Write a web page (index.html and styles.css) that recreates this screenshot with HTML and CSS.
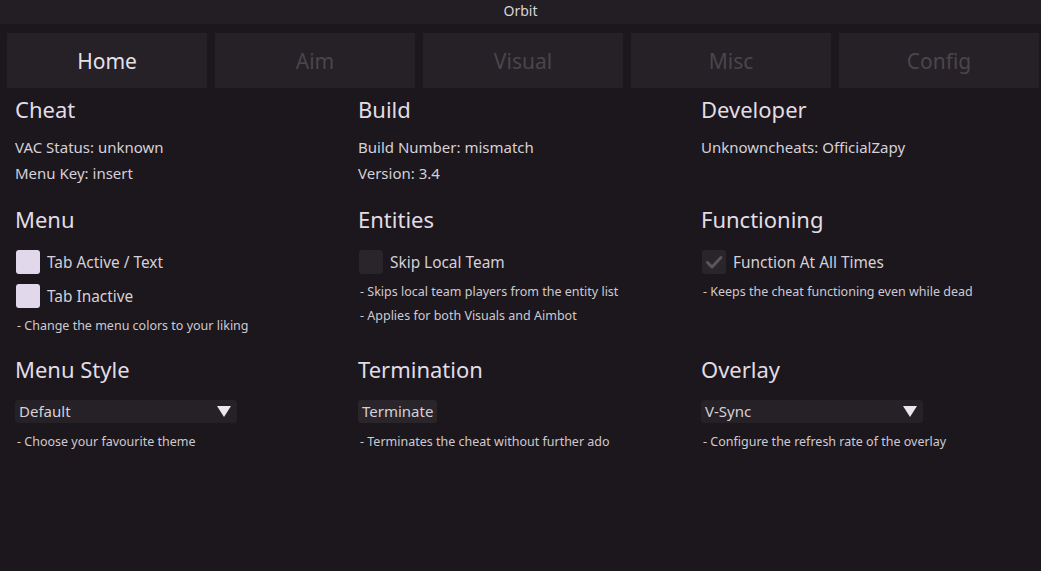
FILE: index.html
```html
<!DOCTYPE html>
<html lang="en">
<head>
    <meta charset="UTF-8">
    <title>Orbit</title>
    <link rel="stylesheet" href="styles.css">
</head>
<body>
    <div class="window">
        <div class="titlebar">Orbit</div>

        <div class="tabs">
            <div class="tab active">Home</div>
            <div class="tab">Aim</div>
            <div class="tab">Visual</div>
            <div class="tab">Misc</div>
            <div class="tab">Config</div>
        </div>

        <div class="grid">
            <!-- Row 1 -->
            <div class="section">
                <h2>Cheat</h2>
                <p class="line">VAC Status: unknown</p>
                <p class="line">Menu Key: insert</p>
            </div>
            <div class="section">
                <h2>Build</h2>
                <p class="line">Build Number: mismatch</p>
                <p class="line">Version: 3.4</p>
            </div>
            <div class="section">
                <h2>Developer</h2>
                <p class="line">Unknowncheats: OfficialZapy</p>
            </div>

            <!-- Row 2 -->
            <div class="section">
                <h2>Menu</h2>
                <div class="option"><span class="box color"></span>Tab Active / Text</div>
                <div class="option"><span class="box color"></span>Tab Inactive</div>
                <p class="note">- Change the menu colors to your liking</p>
            </div>
            <div class="section">
                <h2>Entities</h2>
                <div class="option"><span class="box"></span>Skip Local Team</div>
                <p class="note">- Skips local team players from the entity list</p>
                <p class="note tight">- Applies for both Visuals and Aimbot</p>
            </div>
            <div class="section">
                <h2>Functioning</h2>
                <div class="option">
                    <span class="box">
                        <svg width="24" height="24" viewBox="0 0 24 24"><path d="M5.5 12.5 L10 17 L19 7.5" fill="none" stroke="#5b565d" stroke-width="3" stroke-linecap="round" stroke-linejoin="round"/></svg>
                    </span>Function At All Times
                </div>
                <p class="note">- Keeps the cheat functioning even while dead</p>
            </div>

            <!-- Row 3 -->
            <div class="section">
                <h2>Menu Style</h2>
                <div class="combo">Default<span class="arrow"></span></div>
                <p class="note">- Choose your favourite theme</p>
            </div>
            <div class="section">
                <h2>Termination</h2>
                <div class="button">Terminate</div>
                <p class="note">- Terminates the cheat without further ado</p>
            </div>
            <div class="section">
                <h2>Overlay</h2>
                <div class="combo">V-Sync<span class="arrow"></span></div>
                <p class="note">- Configure the refresh rate of the overlay</p>
            </div>
        </div>
    </div>
</body>
</html>
```

FILE: styles.css
```css
body, html {
    margin: 0;
    padding: 0;
    background-color: #1b171c;
    font-family: 'Noto Sans', 'Open Sans', sans-serif;
    color: #ddd6e0;
}

.window {
    width: 1041px;
    height: 571px;
    overflow: hidden;
}

/* Title bar */
.titlebar {
    height: 24px;
    line-height: 22px;
    background-color: #221e23;
    text-align: center;
    font-size: 14px;
    color: #d9d3dc;
}

/* Tabs */
.tabs {
    display: flex;
    gap: 8px;
    padding: 9px 2px 0 7px;
}

.tab {
    width: 200px;
    height: 55px;
    line-height: 57px;
    background-color: #252126;
    text-align: center;
    font-size: 21px;
    color: #4a454c;
}

.tab.active {
    color: #e6e0ea;
}

/* Content grid */
.grid {
    display: grid;
    grid-template-columns: 343px 343px 343px;
    grid-template-rows: 110px 150px auto;
    padding: 7px 0 0 15px;
}

.section h2 {
    margin: 0 0 11px 0;
    font-size: 22px;
    font-weight: normal;
    line-height: 28px;
    color: #e2dce5;
}

.line {
    margin: 0;
    font-size: 15px;
    line-height: 26px;
    color: #d6d0d9;
}

.option {
    display: flex;
    align-items: center;
    height: 24px;
    margin-top: 17px;
    font-size: 15.4px;
    color: #d6d0d9;
}

.option + .option {
    margin-top: 10px;
}

.box {
    display: block;
    width: 24px;
    height: 24px;
    margin: 0 7px 0 1px;
    border-radius: 3px;
    background-color: #29252a;
}

.box.color {
    background-color: #e2d8eb;
}

.box svg {
    display: block;
}

.note {
    margin: 6px 0 0 2px;
    font-size: 12.5px;
    line-height: 24px;
    color: #cfc9d2;
}

.note.tight {
    margin-top: 0;
}

.combo {
    position: relative;
    width: 218px;
    height: 23px;
    line-height: 23px;
    margin-top: 17px;
    padding-left: 4px;
    border-radius: 3px;
    background-color: #252126;
    font-size: 15px;
    color: #d6d0d9;
}

.arrow {
    position: absolute;
    right: 6px;
    top: 6px;
    width: 0;
    height: 0;
    border-left: 7px solid transparent;
    border-right: 7px solid transparent;
    border-top: 11px solid #ece6ef;
}

.button {
    width: fit-content;
    height: 23px;
    line-height: 23px;
    margin-top: 17px;
    padding: 0 4px;
    border-radius: 3px;
    background-color: #29252a;
    font-size: 15px;
    color: #d6d0d9;
}

.button + .note,
.combo + .note {
    margin-top: 7px;
}
```
